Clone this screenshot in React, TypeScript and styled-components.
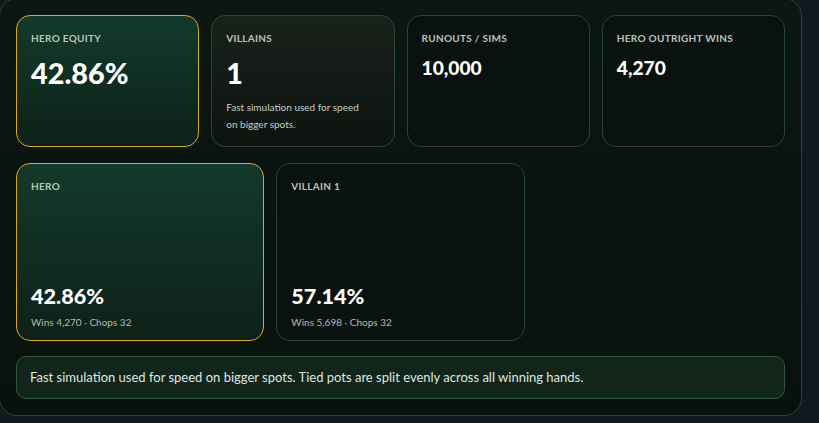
import { FC } from "react";
import styled, { createGlobalStyle, css } from "styled-components";

type Tone = "hero" | "muted" | "plain";

interface Stat {
  label: string;
  value: string;
  tone: Tone;
  big?: boolean;
  note?: string;
}

interface Player {
  name: string;
  equity: string;
  wins: string;
  chops: number;
  tone: Tone;
}

const stats: Stat[] = [
  { label: "Hero equity", value: "42.86%", tone: "hero", big: true },
  {
    label: "Villains",
    value: "1",
    tone: "muted",
    big: true,
    note: "Fast simulation used for speed on bigger spots.",
  },
  { label: "Runouts / sims", value: "10,000", tone: "plain" },
  { label: "Hero outright wins", value: "4,270", tone: "plain" },
];

const players: Player[] = [
  { name: "Hero", equity: "42.86%", wins: "4,270", chops: 32, tone: "hero" },
  { name: "Villain 1", equity: "57.14%", wins: "5,698", chops: 32, tone: "plain" },
];

const App: FC = () => {
  return (
    <>
      <GlobalStyle />
      <Panel>
        <StatGrid>
          {stats.map((s) => (
            <Card key={s.label} $tone={s.tone}>
              <Label>{s.label}</Label>
              <StatValue $big={s.big}>{s.value}</StatValue>
              {s.note && <Hint>{s.note}</Hint>}
            </Card>
          ))}
        </StatGrid>

        <PlayerGrid>
          {players.map((p) => (
            <PlayerCard key={p.name} $tone={p.tone}>
              <Label>{p.name}</Label>
              <PlayerFoot>
                <PlayerEquity>{p.equity}</PlayerEquity>
                <Meta>
                  Wins {p.wins} · Chops {p.chops}
                </Meta>
              </PlayerFoot>
            </PlayerCard>
          ))}
        </PlayerGrid>

        <Footnote>
          Fast simulation used for speed on bigger spots. Tied pots are split
          evenly across all winning hands.
        </Footnote>
      </Panel>
    </>
  );
};

const GlobalStyle = createGlobalStyle`
  * {
    box-sizing: border-box;
  }

  body {
    margin: 0;
    background: #111821;
    font-family: "Lato", "Noto Sans", sans-serif;
    color: #f2f5f3;
    overflow: hidden;
  }
`;

const Panel = styled.section`
  width: 803px;
  margin: -2px 0 0 -1px;
  padding: 16px;
  display: flex;
  flex-direction: column;
  gap: 16px;
  background: linear-gradient(180deg, #0b1712 0%, #08110d 100%);
  border: 1px solid #29463a;
  border-radius: 18px;
`;

const StatGrid = styled.div`
  display: grid;
  grid-template-columns: repeat(4, 1fr);
  gap: 12px;
`;

const PlayerGrid = styled.div`
  display: grid;
  grid-template-columns: repeat(3, 1fr);
  gap: 12px;
  margin-bottom: -1px;
`;

const toneStyles = {
  hero: css`
    background: linear-gradient(180deg, #133a2b 0%, #0d2119 100%);
    border-color: #dba722;
  `,
  muted: css`
    background: linear-gradient(180deg, #19211b 0%, #0d1410 100%);
    border-color: #2c4538;
  `,
  plain: css`
    background: #09120e;
    border-color: #25443a;
  `,
};

const Card = styled.div<{ $tone: Tone }>`
  height: 132px;
  padding: 15px 14px 12px;
  display: flex;
  flex-direction: column;
  border: 1px solid;
  border-radius: 14px;
  ${(p) => toneStyles[p.$tone]}
`;

const PlayerCard = styled(Card)`
  height: 178px;
  padding-bottom: 11px;
`;

const Label = styled.div`
  font-size: 10px;
  line-height: 14px;
  font-weight: 700;
  letter-spacing: 0.03em;
  text-transform: uppercase;
  color: #b6c6bb;
`;

const StatValue = styled.div<{ $big?: boolean }>`
  margin-top: ${(p) => (p.$big ? "11px" : "11px")};
  font-size: ${(p) => (p.$big ? "28.8px" : "19.2px")};
  line-height: ${(p) => (p.$big ? "34px" : "24px")};
  font-weight: 900;
  color: #ffffff;
`;

const Hint = styled.p`
  max-width: 140px;
  margin: 9px 0 0;
  font-size: 10px;
  line-height: 17px;
  color: #c3cec7;
`;

const PlayerFoot = styled.div`
  margin-top: auto;
  display: flex;
  flex-direction: column;
  gap: 6px;
`;

const PlayerEquity = styled.div`
  font-size: 21.6px;
  line-height: 26px;
  font-weight: 900;
  color: #ffffff;
`;

const Meta = styled.div`
  font-size: 10px;
  line-height: 14px;
  color: #aebcb3;
`;

const Footnote = styled.div`
  padding: 12px 13px;
  font-size: 13px;
  line-height: 17px;
  color: #dfe7e1;
  background: #11251a;
  border: 1px solid #2d5940;
  border-radius: 10px;
`;

export default App;
